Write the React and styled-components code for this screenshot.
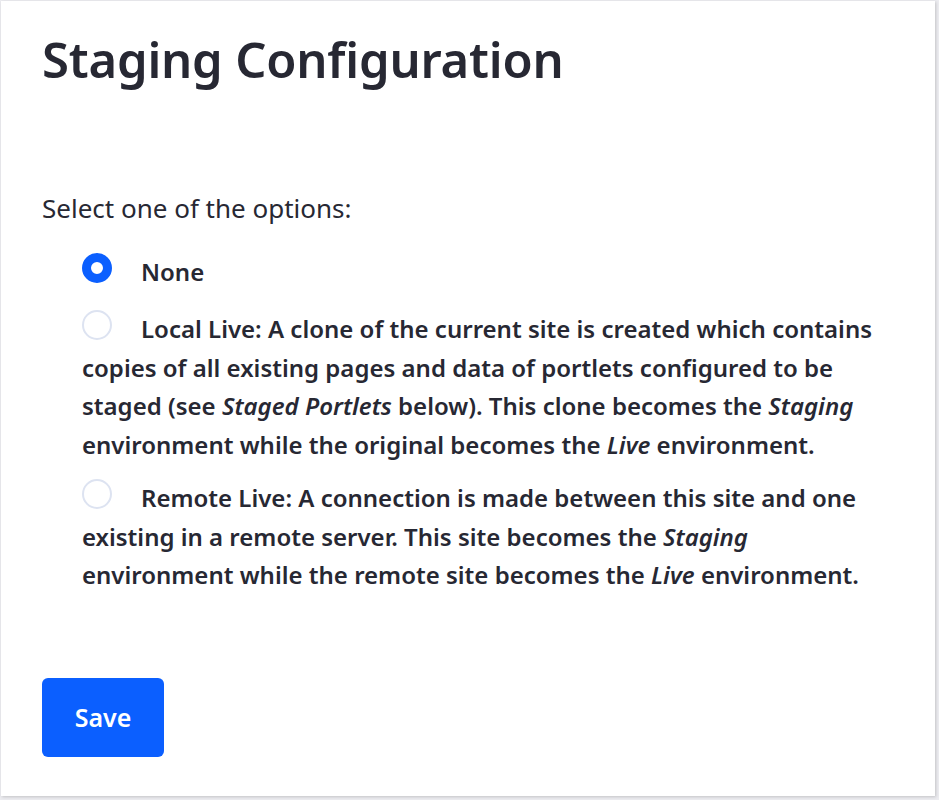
import React, { useState } from 'react';
import styled, { createGlobalStyle } from 'styled-components';

const GlobalStyle = createGlobalStyle`
  html, body {
    margin: 0;
    padding: 0;
    background: #ececf0;
  }
  body {
    font-family: "Noto Sans", "Open Sans", sans-serif;
    color: #272833;
  }
  * { box-sizing: border-box; }
`;

const Page = styled.div`
  padding: 1px 4px 4px 1px;
  height: 800px;
`;

const Card = styled.div`
  background: #fff;
  height: 795px;
  padding: 28px 50px 39px 41px;
  box-shadow: 1px 1px 3px rgba(0, 0, 0, 0.18);
`;

const Title = styled.h1`
  margin: 0;
  font-size: 49px;
  line-height: 61px;
  font-weight: 600;
  letter-spacing: -0.2px;
  color: #272833;
`;

const Fieldset = styled.div`
  margin-top: 99px;
`;

const Prompt = styled.p`
  margin: 0;
  font-size: 26px;
  line-height: 38.5px;
  font-weight: 400;
`;

const Options = styled.div`
  display: flex;
  flex-direction: column;
  gap: 15px;
  margin-top: 25px;
  padding-left: 40px;
`;

const OptionLabel = styled.label`
  display: block;
  font-size: 24px;
  line-height: 38.5px;
  letter-spacing: 0;
  font-weight: 600;
  cursor: pointer;

  &:first-child {
    margin-bottom: 4px;
  }

  em {
    font-style: italic;
  }
`;

const Radio = styled.span`
  display: inline-block;
  width: 30px;
  height: 30px;
  border-radius: 50%;
  vertical-align: -2px;
  margin-right: 29px;
  background: #fff;
  border: ${(p) => (p.checked ? '9px solid #0b5fff' : '2px solid #dde3f1')};
`;

const SaveButton = styled.button`
  margin-top: 83px;
  width: 122px;
  height: 79px;
  border: none;
  border-radius: 6px;
  background: #0b5fff;
  color: #fff;
  font-family: inherit;
  font-size: 25px;
  font-weight: 600;
  cursor: pointer;
`;

const options = [
  { id: 'none', content: <>None</> },
  {
    id: 'local',
    content: (
      <>
        Local Live: A clone of the current site is created which contains copies of all
        existing pages and data of portlets configured to be staged (see{' '}
        <em>Staged Portlets</em> below). This clone becomes the <em>Staging</em> environment
        while the original becomes the <em>Live</em> environment.
      </>
    ),
  },
  {
    id: 'remote',
    content: (
      <>
        Remote Live: A connection is made between this site and one existing in a remote
        server. This site becomes the <em>Staging</em> environment while the remote site
        becomes the <em>Live</em> environment.
      </>
    ),
  },
];

export default function App() {
  const [selected, setSelected] = useState('none');
  return (
    <Page>
      <GlobalStyle />
      <Card>
        <Title>Staging Configuration</Title>
        <Fieldset>
          <Prompt>Select one of the options:</Prompt>
          <Options>
            {options.map((o) => (
              <OptionLabel key={o.id} onClick={() => setSelected(o.id)}>
                <Radio checked={selected === o.id} />
                {o.content}
              </OptionLabel>
            ))}
          </Options>
        </Fieldset>
        <SaveButton>Save</SaveButton>
      </Card>
    </Page>
  );
}
